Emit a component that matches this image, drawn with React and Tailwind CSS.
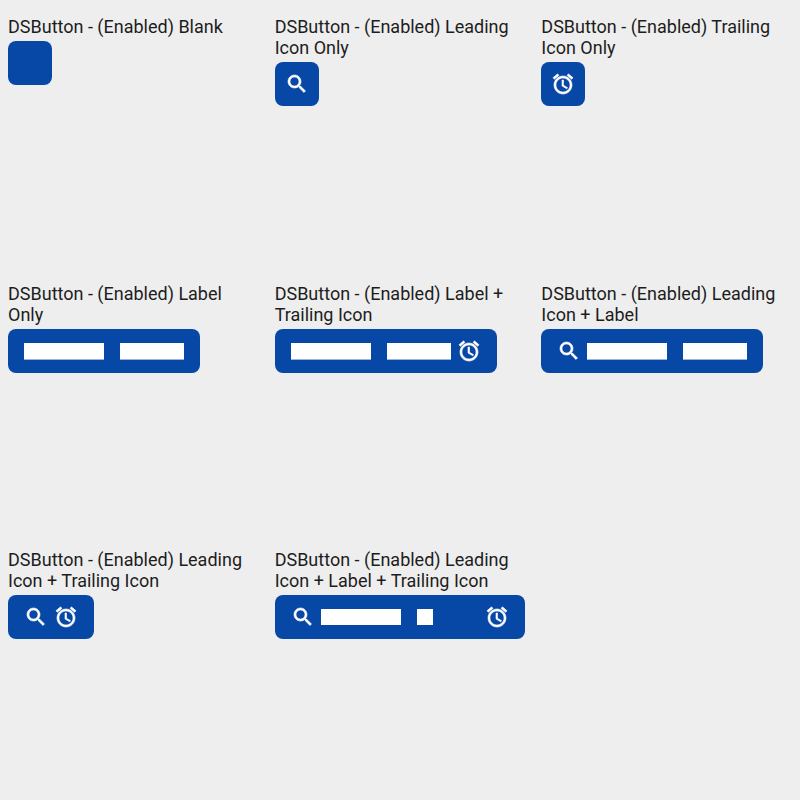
function Search() {
  return (
    <svg viewBox="0 0 24 24" className="size-6 shrink-0 fill-white stroke-white stroke-[0.6]">
      <path d="M15.5 14h-.79l-.28-.27C15.41 12.59 16 11.11 16 9.5 16 5.91 13.09 3 9.5 3S3 5.91 3 9.5 5.91 16 9.5 16c1.61 0 3.09-.59 4.23-1.57l.27.28v.79l5 4.99L20.49 19l-4.99-5zm-6 0C7.01 14 5 11.99 5 9.5S7.01 5 9.5 5 14 7.01 14 9.5 11.99 14 9.5 14z" />
    </svg>
  );
}

function Alarm() {
  return (
    <svg viewBox="0 0 24 24" className="size-6 shrink-0 fill-white stroke-white stroke-[0.6]">
      <path d="M22 5.72l-4.6-3.86-1.29 1.53 4.6 3.86L22 5.72zM7.88 3.39L6.6 1.86 2 5.71l1.29 1.53 4.59-3.85zM12.5 8H11v6l4.75 2.85.75-1.23-4-2.37V8zM12 4c-4.97 0-9 4.03-9 9s4.02 9 9 9c4.97 0 9-4.03 9-9s-4.03-9-9-9zm0 16c-3.87 0-7-3.13-7-7s3.13-7 7-7 7 3.13 7 7-3.13 7-7 7z" />
    </svg>
  );
}

// Placeholder label: one solid block per word.
function Label({ short }) {
  const block = short
    ? "h-4 bg-white"
    : "-mb-px h-[17px] border-b border-white/60 bg-white bg-clip-padding";
  return (
    <span className={short ? "flex flex-1 gap-4" : "flex gap-4"}>
      <span className={`w-20 ${block}`} />
      <span className={`${short ? "w-4" : "w-16"} ${block}`} />
    </span>
  );
}

const items = [
  { title: "Blank" },
  { title: "Leading Icon Only", leading: true, square: true },
  { title: "Trailing Icon Only", trailing: true, square: true },
  { title: "Label Only", label: true },
  { title: "Label + Trailing Icon", label: true, trailing: true },
  { title: "Leading Icon + Label", leading: true, label: true },
  { title: "Leading Icon + Trailing Icon", leading: true, trailing: true },
  { title: "Leading Icon + Label + Trailing Icon", leading: true, label: true, trailing: true, short: true },
];

function DSButton({ leading, trailing, label, square, short }) {
  const box = leading || trailing || label ? (square ? "px-2.5" : "px-4") : "w-11";
  return (
    <button
      type="button"
      className={`flex h-11 items-center gap-1.5 rounded-lg bg-[#0747a6] ${box} ${short ? "w-full" : ""}`}
    >
      {leading && <Search />}
      {label && <Label short={short} />}
      {trailing && <Alarm />}
    </button>
  );
}

export default function App() {
  return (
    <main className="grid h-[800px] w-[800px] grid-cols-3 grid-rows-3 bg-[#eeeeee] font-[Roboto,sans-serif]">
      {items.map(({ title, ...props }) => (
        <section key={title} className="flex flex-col items-start gap-1 px-2 pt-4">
          <h2 className="text-[18px] leading-[21px] text-[#1d1d1d]">{`DSButton - (Enabled) ${title}`}</h2>
          <DSButton {...props} />
        </section>
      ))}
    </main>
  );
}
